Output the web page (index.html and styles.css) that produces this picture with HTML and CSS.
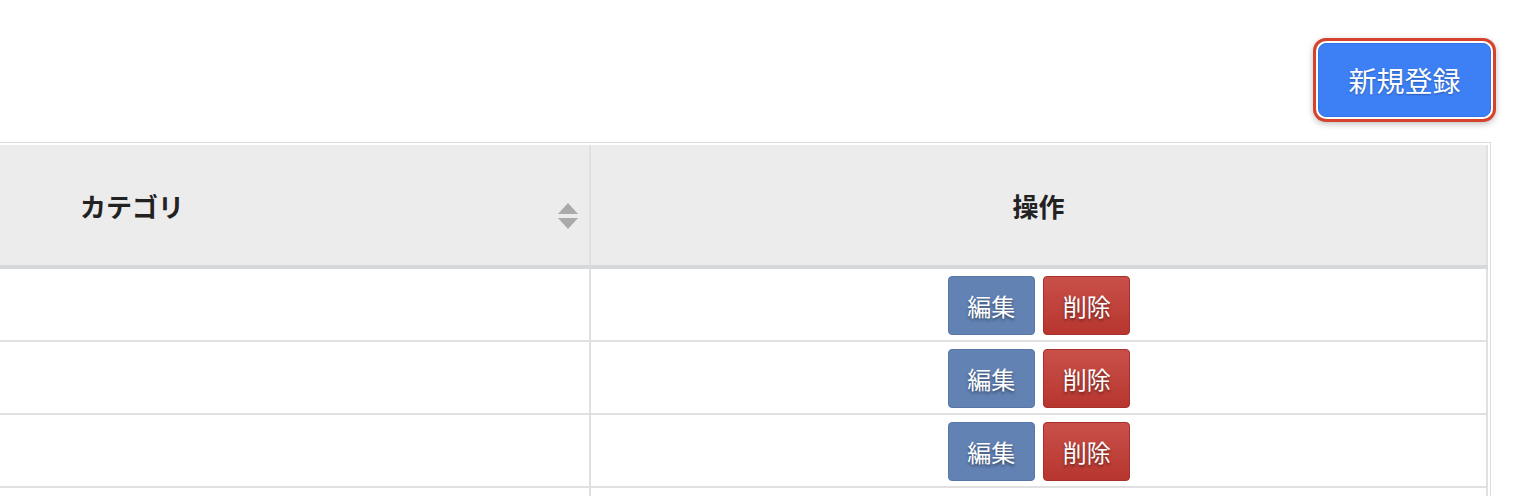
FILE: index.html
```html
<!DOCTYPE html>
<html lang="ja">
<head>
    <meta charset="UTF-8">
    <title>カテゴリ一覧</title>
    <link rel="stylesheet" href="styles.css">
</head>
<body>
<div class="page">
    <div class="toolbar">
        <button class="btn-new">新規登録</button>
    </div>

    <div class="table-wrap">
        <table class="list">
            <thead>
                <tr>
                    <th class="col-name sortable">
                        カテゴリ
                        <span class="sort-icon"></span>
                    </th>
                    <th class="col-action">操作</th>
                </tr>
            </thead>
            <tbody>
                <tr>
                    <td></td>
                    <td class="col-action">
                        <button class="btn btn-edit">編集</button>
                        <button class="btn btn-delete">削除</button>
                    </td>
                </tr>
                <tr>
                    <td></td>
                    <td class="col-action">
                        <button class="btn btn-edit">編集</button>
                        <button class="btn btn-delete">削除</button>
                    </td>
                </tr>
                <tr>
                    <td></td>
                    <td class="col-action">
                        <button class="btn btn-edit">編集</button>
                        <button class="btn btn-delete">削除</button>
                    </td>
                </tr>
                <tr>
                    <td></td>
                    <td class="col-action"></td>
                </tr>
            </tbody>
        </table>
    </div>
</div>
</body>
</html>
```

FILE: styles.css
```css
body {
    margin: 0;
    background-color: #fff;
    font-family: "Noto Sans CJK JP", "Noto Sans", sans-serif;
    color: #222;
}

.page {
    padding: 43px 27px 0 0;
}

.toolbar {
    display: flex;
    justify-content: flex-end;
}

.btn-new {
    width: 173px;
    height: 74px;
    background-color: #3d80f5;
    color: #fff;
    font-family: inherit;
    font-size: 28px;
    border: 1px solid #3574e4;
    border-radius: 8px;
    box-shadow: 0 0 0 2px #fff, 0 0 0 5px #d5432c, 0 2px 6px 5px rgba(0, 0, 0, 0.25);
    text-shadow: 0 1px 2px rgba(0, 0, 0, 0.3);
    cursor: pointer;
}

.table-wrap {
    margin-top: 25px;
    width: 1488px;
    border: 1px solid #ddd;
    border-left: none;
    padding: 2px 2px 0 0;
}

.list {
    width: 100%;
    border-collapse: collapse;
}

.list th {
    height: 120px;
    background-color: #ececec;
    font-size: 26px;
    font-weight: bold;
    color: #222;
    border: 2px solid #e0e0e0;
    border-top: none;
    border-bottom: 4px solid #d5d9dc;
    text-align: center;
    padding: 0;
}

.list th.col-name {
    width: 509px;
    text-align: left;
    padding-left: 80px;
    border-left: none;
    position: relative;
}

.list td {
    height: 69px;
    border: 2px solid #e0e0e0;
    padding: 2px 0 0;
}

.list td:first-child {
    border-left: none;
}

.col-action {
    text-align: center;
}

.sort-icon {
    position: absolute;
    right: 11px;
    top: 58px;
    width: 20px;
    height: 26px;
}

.sort-icon::before,
.sort-icon::after {
    content: "";
    position: absolute;
    left: 0;
    border-left: 10px solid transparent;
    border-right: 10px solid transparent;
}

.sort-icon::before {
    top: 0;
    border-bottom: 11px solid #aaa;
}

.sort-icon::after {
    bottom: 0;
    border-top: 11px solid #aaa;
}

.btn {
    width: 87px;
    height: 59px;
    margin: 0 2px 0 3px;
    font-family: inherit;
    font-size: 24px;
    color: #fff;
    border-radius: 4px;
    text-shadow: 0 2px 3px rgba(0, 0, 0, 0.45);
    cursor: pointer;
    vertical-align: middle;
}

.btn-edit {
    background-color: #6282b4;
    border: 1px solid #5877a8;
}

.btn-delete {
    background: linear-gradient(#c9504a, #b7362f);
    border: 1px solid #a8302a;
}
```
